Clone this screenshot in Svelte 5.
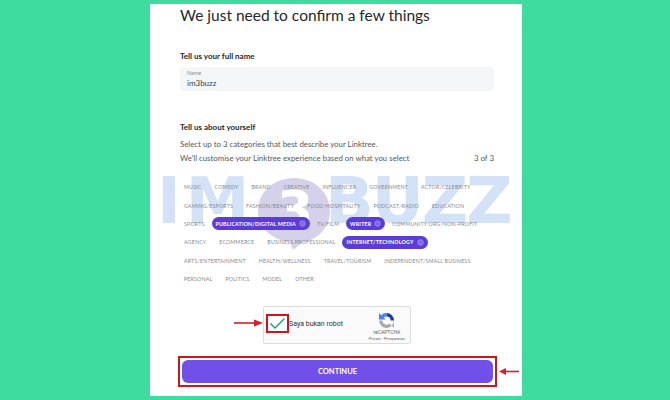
<script>
	const rows = [
		['Music', 'Comedy', 'Brand', 'Creative', 'Influencer', 'Government', 'Actor/Celebrity'],
		['Gaming/Esports', 'Fashion/Beauty', 'Food/Hospitality', 'Podcast/Radio', 'Education'],
		['Sports', '*Publication/Digital Media', 'TV/Film', '*Writer', 'Community Org/Non-Profit'],
		['Agency', 'Ecommerce', 'Business Professional', '*Internet/Technology'],
		['Arts/Entertainment', 'Health/Wellness', 'Travel/Tourism', 'Independent/Small Business'],
		['Personal', 'Politics', 'Model', 'Other']
	];
</script>

<div class="page">
	<div class="card">
		<div class="watermark" aria-hidden="true">
			<span class="im">IM</span>
			<span class="blob">
				<svg width="74" height="72" viewBox="0 0 74 72">
					<path d="M37 0C57 0 73 14 73 33C73 50 60 62 46 64L36 72L33 64C15 62 1 50 1 33C1 14 17 0 37 0Z" fill="#d6d1ea" />
				</svg>
				<b>3</b>
			</span>
			<span class="buzz">BUZZ</span>
		</div>

		<h1>We just need to confirm a few things</h1>

		<h2 class="nameTitle">Tell us your full name</h2>
		<div class="input">
			<small>Name</small>
			<span>im3buzz</span>
		</div>

		<h2 class="aboutTitle">Tell us about yourself</h2>
		<p>Select up to 3 categories that best describe your Linktree.</p>
		<div class="counter">
			<p>We'll customise your Linktree experience based on what you select</p>
			<p>3 of 3</p>
		</div>

		<div class="chips">
			{#each rows as row}
				<div class="row">
					{#each row as chip}
						{#if chip[0] === '*'}
							<span class="chip on">
								{chip.slice(1)}
								<svg width="7" height="7" viewBox="0 0 8 8">
									<circle cx="4" cy="4" r="3.6" fill="#8f78ee" />
									<path d="M2.7 2.7L5.3 5.3M5.3 2.7L2.7 5.3" stroke="#5a3bd6" stroke-width="0.7" />
								</svg>
							</span>
						{:else}
							<span class="chip">{chip}</span>
						{/if}
					{/each}
				</div>
			{/each}
		</div>

		<div class="captchaWrap">
			<div class="captcha">
				<svg class="pointer left" width="29" height="8" viewBox="0 0 29 8">
					<path d="M0 4H21" stroke="#d81f26" stroke-width="1.6" />
					<path d="M20 0.5L29 4L20 7.5Z" fill="#d81f26" />
				</svg>
				<div class="checkBox">
					<svg width="17" height="13" viewBox="0 0 17 13">
						<path d="M1.5 6.5L6 11L15.5 1.5" fill="none" stroke="#1f9d62" stroke-width="1.4" />
					</svg>
				</div>
				<span class="robot">Saya bukan robot</span>
				<div class="brand">
					<svg width="17" height="17" viewBox="0 0 17 17">
						<path d="M8.5 1A7.5 7.5 0 0 1 16 8.5H12.6A4.1 4.1 0 0 0 8.5 4.4Z" fill="#1c3aa9" />
						<path d="M8.5 1A7.5 7.5 0 0 0 3.2 3.2L1 1V7.5H7.5L5.6 5.6A4.1 4.1 0 0 1 8.5 4.4Z" fill="#4285f4" />
						<path d="M1 8.5A7.5 7.5 0 0 0 16 8.5V16L13.8 13.8L11.4 11.4A4.1 4.1 0 0 1 4.4 8.5Z" fill="#ababab" />
					</svg>
					<span class="re">reCAPTCHA</span>
					<span class="terms">Privasi - Persyaratan</span>
				</div>
			</div>
		</div>

		<div class="buttonWrap">
			<button>CONTINUE</button>
			<svg class="pointer right" width="20" height="7" viewBox="0 0 20 7">
				<path d="M6 3.5H20" stroke="#d81f26" stroke-width="1.6" />
				<path d="M7 0L0 3.5L7 7Z" fill="#d81f26" />
			</svg>
		</div>
	</div>
</div>

<style>
	:global(body) {
		background: #3edd9f;
	}
	.page {
		height: 400px;
		box-sizing: border-box;
		padding: 4px 0 4px 150px;
		background: #3edd9f;
		overflow: hidden;
	}
	.card {
		position: relative;
		width: 372px;
		height: 392px;
		box-sizing: border-box;
		padding: 0 28px 0 30px;
		background: #fff;
		font-family: 'Lato', sans-serif;
		color: #3c3f44;
	}
	.card > * {
		position: relative;
	}
	.card > .watermark {
		position: absolute;
		left: 7px;
		top: 167px;
		height: 60px;
		display: flex;
		align-items: center;
		font-family: 'DejaVu Sans', sans-serif;
		font-weight: 700;
		font-size: 64px;
		line-height: 60px;
		color: #d3e2f6;
	}
	.im {
		letter-spacing: 5px;
		width: 100px;
	}
	.blob {
		position: relative;
		width: 74px;
		height: 72px;
		margin-top: 25px;
	}
	.blob b {
		position: absolute;
		left: 20px;
		top: 2px;
		color: #fff;
		font-size: 52px;
	}
	.buzz {
		margin-left: -6px;
		letter-spacing: -2px;
	}
	h1 {
		margin: 0;
		font-size: 15.5px;
		line-height: 23px;
		font-weight: 400;
		white-space: nowrap;
		color: #26282c;
	}
	h2 {
		margin: 0;
		font-size: 8px;
		line-height: 12px;
		font-weight: 700;
		color: #26282c;
	}
	.nameTitle {
		margin-top: 23px;
	}
	.input {
		display: flex;
		flex-direction: column;
		gap: 2px;
		height: 24px;
		box-sizing: border-box;
		margin-top: 5px;
		padding: 3px 7px;
		background: #f5f6f8;
		border-radius: 4px;
		font-size: 8px;
		line-height: 9px;
	}
	.input small {
		font-size: 5.5px;
		line-height: 7px;
		color: #8b8e94;
	}
	.aboutTitle {
		margin-top: 30px;
	}
	p {
		margin: 0;
		font-size: 7.85px;
		line-height: 13.5px;
		color: #55585e;
	}
	.aboutTitle + p {
		margin-top: 5px;
	}
	.counter {
		display: flex;
		justify-content: space-between;
	}
	.chips {
		margin-top: 13px;
	}
	.row {
		display: flex;
		align-items: center;
		height: 18.35px;
		gap: 5px;
	}
	.chip {
		display: flex;
		align-items: center;
		gap: 3px;
		height: 13px;
		padding: 0 4px;
		border-radius: 7px;
		font-size: 5.25px;
		letter-spacing: 0.2px;
		text-transform: uppercase;
		white-space: nowrap;
		color: #85888e;
	}
	.chip.on {
		margin: 0 -2px;
		background: #5b3cd8;
		color: #fff;
		font-weight: 700;
	}
	.captchaWrap {
		display: flex;
		justify-content: center;
		margin-top: 18px;
	}
	.captcha {
		position: relative;
		display: flex;
		align-items: flex-start;
		width: 148px;
		height: 38px;
		box-sizing: border-box;
		padding: 7px 0 0 2px;
		background: #fafafa;
		border: 1px solid #dcdcdc;
		border-radius: 2px;
		font-family: 'Roboto', sans-serif;
	}
	.checkBox {
		display: flex;
		align-items: center;
		justify-content: center;
		width: 23px;
		height: 19px;
		box-sizing: border-box;
		border: 2px solid #d1141c;
		background: #fff;
	}
	.robot {
		margin-top: 6px;
		font-size: 7px;
		line-height: 9px;
		color: #333;
	}
	.brand {
		display: flex;
		flex-direction: column;
		align-items: center;
		margin: -2px 0 0 auto;
		padding-right: 5px;
		color: #666;
	}
	.re {
		font-size: 5px;
		line-height: 7px;
	}
	.terms {
		font-size: 4px;
		line-height: 6px;
	}
	.buttonWrap {
		position: relative;
		display: flex;
		margin: 12px 0 0 -2px;
		width: 319px;
		height: 31px;
		box-sizing: border-box;
		padding: 2px;
		border: 2px solid #d1141c;
	}
	button {
		flex: 1;
		margin: 0;
		padding: 0;
		border: 0;
		border-radius: 6px;
		background: #7050e8;
		color: #fff;
		font-family: 'Lato', sans-serif;
		font-size: 7.5px;
		font-weight: 700;
	}
	.pointer {
		position: absolute;
	}
	.left {
		left: -30px;
		top: 12px;
	}
	.right {
		left: 319px;
		top: 10px;
	}
</style>
